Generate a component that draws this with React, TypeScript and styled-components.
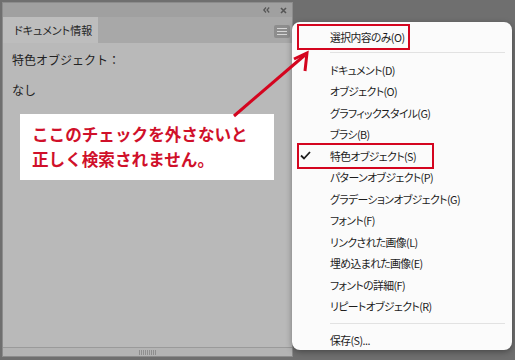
import React from "react";
import styled, { createGlobalStyle } from "styled-components";

const GlobalStyle = createGlobalStyle`
  html, body {
    margin: 0;
    padding: 0;
    background: #6f6f6f;
  }
  body {
    font-family: "Noto Sans CJK JP", "Noto Sans", sans-serif;
  }
`;

const Stage = styled.div`
  position: relative;
  width: 515px;
  height: 360px;
  overflow: hidden;
  background: #6f6f6f;
  display: flex;
  align-items: flex-start;
  padding: 2px 0 0 2px;
  box-sizing: border-box;
`;

const Panel = styled.div`
  width: 291px;
  height: 355px;
  display: flex;
  flex-direction: column;
  background: #b9b9b9;
  border: 1px solid #8c8c8c;
  box-sizing: border-box;
`;

const TitleBar = styled.div`
  height: 14px;
  background: #a0a0a0;
  display: flex;
  align-items: center;
  justify-content: flex-end;
  gap: 10px;
  padding-right: 5px;
`;

const TabRow = styled.div`
  height: 26px;
  background: #a8a8a8;
  display: flex;
  align-items: stretch;
`;

const Tab = styled.div`
  width: 95px;
  background: #bdbdbd;
  display: flex;
  align-items: center;
  padding-left: 11px;
  box-sizing: border-box;
  font-size: 11px;
  color: #262626;
  font-feature-settings: "palt";
`;

const TabSpacer = styled.div`
  flex: 1;
  display: flex;
  align-items: center;
  justify-content: flex-end;
  padding-right: 2px;
`;

const MenuButton = styled.div`
  width: 16px;
  height: 13px;
  border-radius: 2px;
  background: #8d8d8d;
  display: flex;
  flex-direction: column;
  justify-content: center;
  gap: 2px;
  padding: 0 3px;
  box-sizing: border-box;
  margin-top: 2px;

  span {
    display: block;
    height: 1px;
    background: #d6d6d6;
  }
`;

const Body = styled.div`
  flex: 1;
  padding: 8px 9px;
  display: flex;
  flex-direction: column;
  gap: 12px;
  font-size: 12px;
  color: #222;
`;

const BodyLine = styled.div`
  height: 18px;
  line-height: 18px;
`;

const StatusBar = styled.div`
  height: 8px;
  border-top: 1px solid #9a9a9a;
  background: #b4b4b4;
  display: flex;
  justify-content: center;
  align-items: center;
`;

const Grip = styled.div`
  width: 18px;
  height: 5px;
  background: repeating-linear-gradient(
    to right,
    #8e8e8e 0 1px,
    transparent 1px 2px
  );
`;

const Menu = styled.div`
  position: absolute;
  left: 292px;
  top: 22px;
  width: 220px;
  height: 328px;
  background: #fbfbfb;
  border-radius: 8px;
  box-shadow: 0 2px 6px rgba(0, 0, 0, 0.35);
  padding-top: 4px;
  box-sizing: border-box;
  font-size: 10.8px;
  letter-spacing: -0.55px;
  color: #1c1c1c;
  font-feature-settings: "palt";
`;

const MenuItem = styled.div<{ $height?: number }>`
  position: relative;
  height: ${(p) => p.$height ?? 21.5}px;
  display: flex;
  align-items: center;
`;

const CheckCell = styled.div`
  width: 38px;
  padding-left: 8px;
  box-sizing: border-box;
  display: flex;
  align-items: center;
`;

const Separator = styled.div<{ $before: number; $after: number }>`
  height: 1px;
  margin: ${(p) => p.$before}px 7px ${(p) => p.$after}px 38px;
  background: #e2e2e2;
`;

const RedBox = styled.div<{ $width: number }>`
  position: absolute;
  left: 5px;
  top: -2px;
  bottom: -2px;
  width: ${(p) => p.$width}px;
  border: 2.5px solid #d4051f;
  box-sizing: border-box;
  pointer-events: none;
`;

const Callout = styled.div`
  position: absolute;
  left: 20px;
  top: 114px;
  width: 254px;
  height: 66px;
  background: #ffffff;
  padding: 8px 0 0 12px;
  box-sizing: border-box;
  color: #d0102a;
  font-weight: 700;
  font-size: 16.6px;
  line-height: 25px;
  white-space: nowrap;
`;

const ArrowLayer = styled.svg`
  position: absolute;
  left: 0;
  top: 0;
  pointer-events: none;
`;

const items: { label: string; checked?: boolean; box?: number }[] = [
  { label: "ドキュメント(D)" },
  { label: "オブジェクト(O)" },
  { label: "グラフィックスタイル(G)" },
  { label: "ブラシ(B)" },
  { label: "特色オブジェクト(S)", checked: true, box: 137 },
  { label: "パターンオブジェクト(P)" },
  { label: "グラデーションオブジェクト(G)" },
  { label: "フォント(F)" },
  { label: "リンクされた画像(L)" },
  { label: "埋め込まれた画像(E)" },
  { label: "フォントの詳細(F)" },
  { label: "リピートオブジェクト(R)" },
];

const Check = () => (
  <svg width="11" height="9" viewBox="0 0 11 9">
    <polyline
      points="1,4.5 4,7.5 10,1"
      fill="none"
      stroke="#1c1c1c"
      strokeWidth="1.8"
    />
  </svg>
);

const App = () => {
  return (
    <Stage>
      <GlobalStyle />
      <Panel>
        <TitleBar>
          <svg width="7" height="6" viewBox="0 0 7 6">
            <polyline points="3,0.5 0.8,3 3,5.5" fill="none" stroke="#555" strokeWidth="1.2" />
            <polyline points="6.2,0.5 4,3 6.2,5.5" fill="none" stroke="#555" strokeWidth="1.2" />
          </svg>
          <svg width="7" height="7" viewBox="0 0 7 7">
            <path d="M1 1 L6 6 M6 1 L1 6" stroke="#555" strokeWidth="1.6" />
          </svg>
        </TitleBar>
        <TabRow>
          <Tab>ドキュメント情報</Tab>
          <TabSpacer>
            <MenuButton>
              <span />
              <span />
              <span />
            </MenuButton>
          </TabSpacer>
        </TabRow>
        <Body>
          <BodyLine>特色オブジェクト：</BodyLine>
          <BodyLine>なし</BodyLine>
        </Body>
        <StatusBar>
          <Grip />
        </StatusBar>
      </Panel>

      <Menu>
        <MenuItem $height={22}>
          <CheckCell />
          選択内容のみ(O)
          <RedBox $width={113} />
        </MenuItem>
        <Separator $before={4} $after={6} />
        {items.map((item) => (
          <MenuItem key={item.label}>
            <CheckCell>{item.checked && <Check />}</CheckCell>
            {item.label}
            {item.box && <RedBox $width={item.box} />}
          </MenuItem>
        ))}
        <Separator $before={6} $after={5} />
        <MenuItem>
          <CheckCell />
          保存(S)...
        </MenuItem>
      </Menu>

      <Callout>
        <div>ここのチェックを外さないと</div>
        <div>正しく検索されません。</div>
      </Callout>

      <ArrowLayer width="515" height="360" viewBox="0 0 515 360">
        <line x1="234" y1="116" x2="305" y2="55" stroke="#d4051f" strokeWidth="3" />
        <polyline
          points="294,59 307,53 305,71"
          fill="none"
          stroke="#d4051f"
          strokeWidth="3"
          strokeLinejoin="miter"
        />
      </ArrowLayer>
    </Stage>
  );
};

export default App;
